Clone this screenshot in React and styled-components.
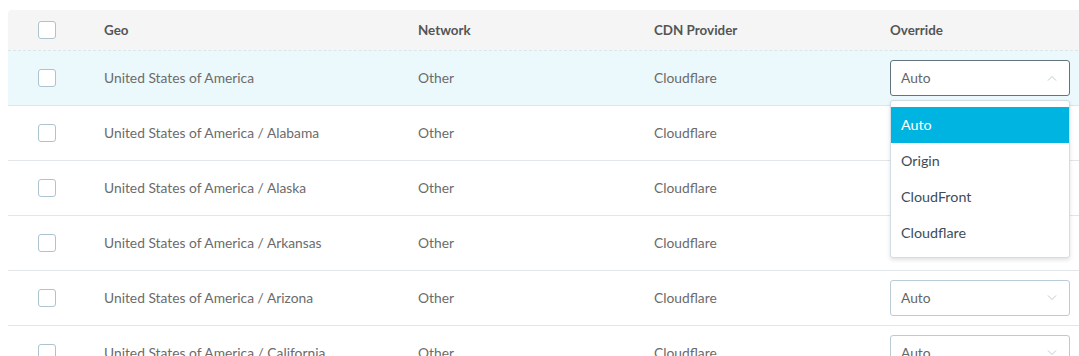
import styled, { createGlobalStyle } from 'styled-components';

const GlobalStyle = createGlobalStyle`
  body {
    margin: 0;
    background: #fff;
    font-family: 'Lato', 'Liberation Sans', sans-serif;
    overflow: hidden;
  }
`;

const Page = styled.div`
  padding: 10px 0 0 8px;
  width: 1100px;
`;

const Row = styled.div`
  display: grid;
  grid-template-columns: 96px 314px 236px 236px 1fr;
  align-items: center;
  height: ${p => (p.head ? '40px' : '54px')};
  background: ${p => (p.head ? '#f5f5f5' : p.active ? '#ebf8fc' : '#fff')};
  border-bottom: 1px ${p => (p.head ? 'dashed #d8e7ee' : 'solid #e3e6e8')};
  border-radius: ${p => (p.head ? '4px 0 0 0' : '0')};
  box-shadow: ${p => (p.head ? '0 1px 2px rgba(0,0,0,0.04)' : 'none')};
`;

const CheckCell = styled.div`
  padding-left: 30px;
  display: flex;
  align-items: center;
`;

const Checkbox = styled.span`
  width: 16px;
  height: 16px;
  border: 1px solid #abc4d0;
  border-radius: 3px;
  background: #fff;
`;

const Cell = styled.div`
  font-size: ${p => (p.head ? '13.4px' : '13.8px')};
  color: ${p => (p.head ? '#555' : '#6b6b6b')};
  font-weight: ${p => (p.head ? 700 : 400)};
  position: relative;
  margin-top: ${p => (p.head ? '0' : '-1px')};
`;

const Select = styled.div`
  width: 180px;
  height: 36px;
  box-sizing: border-box;
  border: 1px solid ${p => (p.open ? '#627480' : '#b9ccd6')};
  border-radius: 3px;
  background: #fff;
  display: flex;
  align-items: center;
  justify-content: space-between;
  padding: 0 12px 0 10px;
  color: #666;
  font-size: 13.8px;
`;

const Menu = styled.div`
  position: absolute;
  top: 40px;
  left: 0;
  width: 180px;
  box-sizing: border-box;
  background: #fff;
  border: 1px solid #d3dee4;
  border-radius: 3px;
  box-shadow: 0 2px 4px rgba(0, 0, 0, 0.12);
  padding: 6px 0;
  z-index: 2;
`;

const Option = styled.div`
  height: 36px;
  display: flex;
  align-items: center;
  padding-left: 10px;
  font-size: 14.3px;
  color: ${p => (p.selected ? '#fff' : '#3e4d58')};
  background: ${p => (p.selected ? '#00b4e2' : 'transparent')};
`;

const Chevron = ({ up }) => (
  <svg width="10" height="6" viewBox="0 0 10 6" fill="none">
    <path
      d={up ? 'M1 5.5 L5 1.5 L9 5.5' : 'M1 0.5 L5 4.5 L9 0.5'}
      stroke="#bccbd3"
      strokeWidth="1"
    />
  </svg>
);

const rows = [
  'United States of America',
  'United States of America / Alabama',
  'United States of America / Alaska',
  'United States of America / Arkansas',
  'United States of America / Arizona',
  'United States of America / California',
];

const options = ['Auto', 'Origin', 'CloudFront', 'Cloudflare'];

export default function App() {
  return (
    <Page>
      <GlobalStyle />
      <Row head>
        <CheckCell><Checkbox /></CheckCell>
        <Cell head>Geo</Cell>
        <Cell head>Network</Cell>
        <Cell head>CDN Provider</Cell>
        <Cell head>Override</Cell>
      </Row>
      {rows.map((geo, i) => (
        <Row key={geo} active={i === 0}>
          <CheckCell><Checkbox /></CheckCell>
          <Cell>{geo}</Cell>
          <Cell>Other</Cell>
          <Cell>Cloudflare</Cell>
          <Cell>
            {(i === 0 || i >= 4) && (
              <Select open={i === 0}>
                Auto
                <Chevron up={i === 0} />
              </Select>
            )}
            {i === 0 && (
              <Menu>
                {options.map((o, j) => (
                  <Option key={o} selected={j === 0}>{o}</Option>
                ))}
              </Menu>
            )}
          </Cell>
        </Row>
      ))}
    </Page>
  );
}
